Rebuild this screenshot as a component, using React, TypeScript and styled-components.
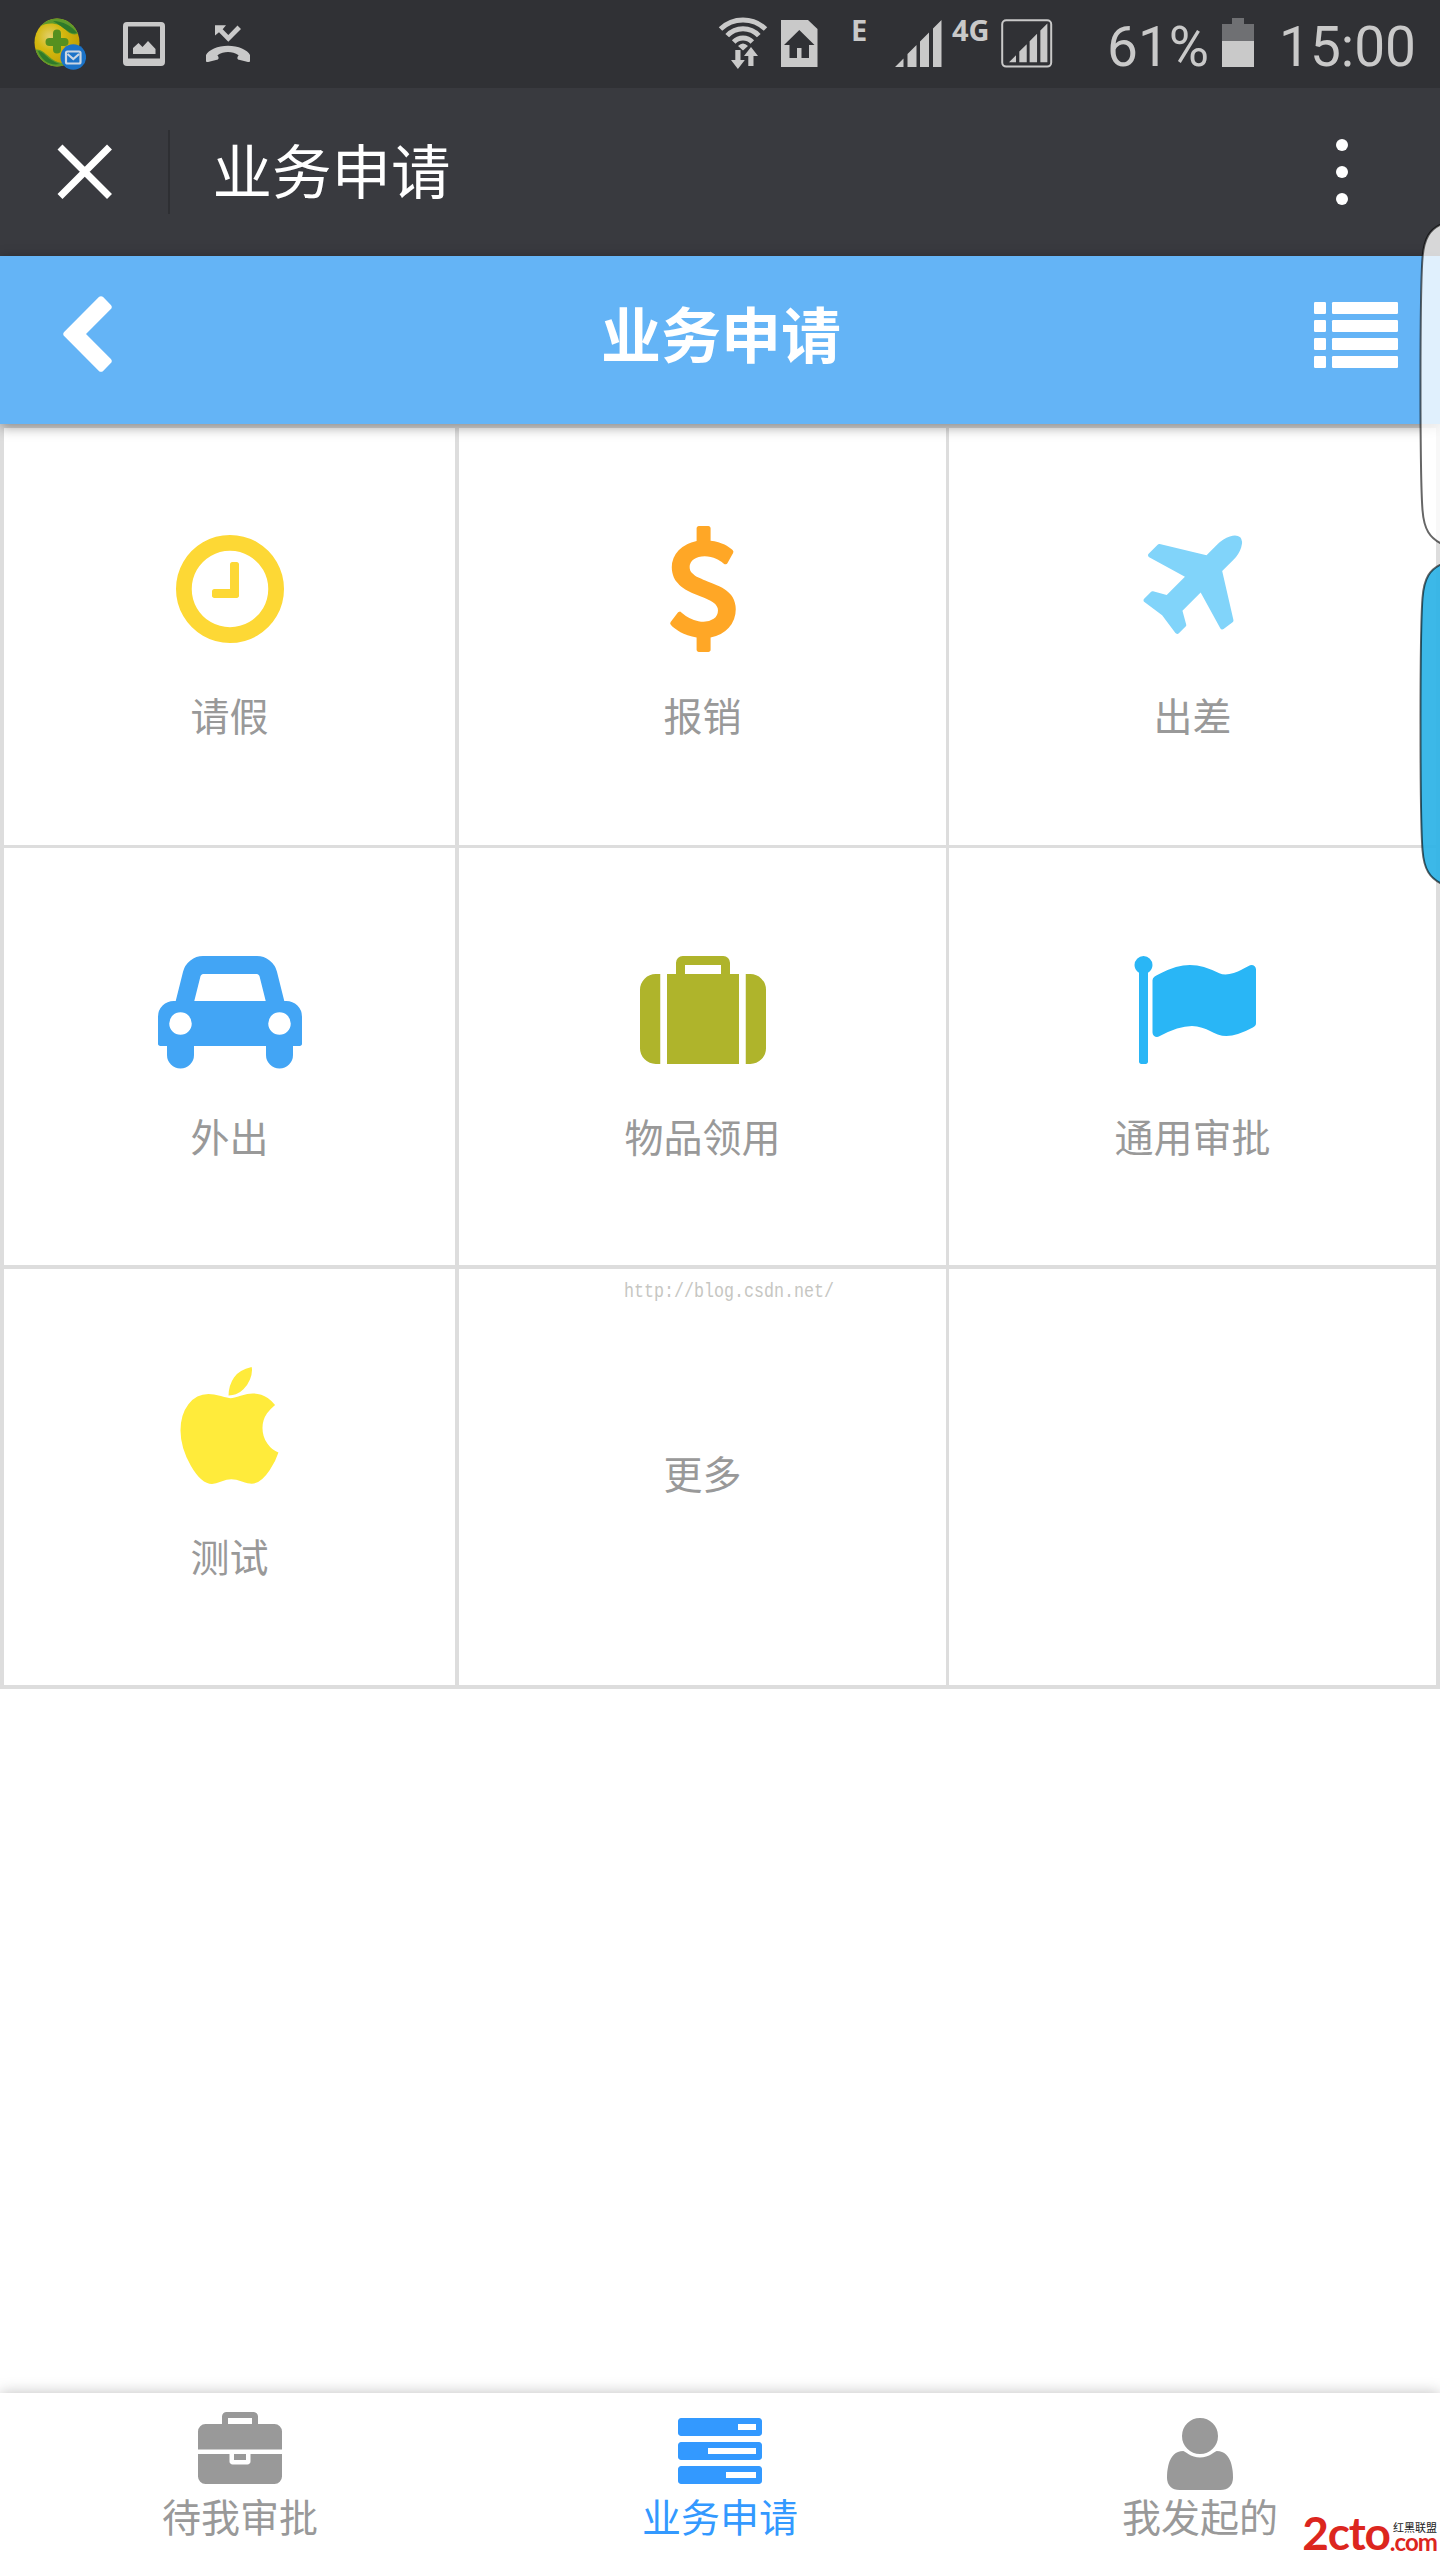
import React from "react";
import styled, { createGlobalStyle } from "styled-components";

const sans = '"Noto Sans CJK SC", "Noto Sans", sans-serif';

const GlobalStyle = createGlobalStyle`
  * { box-sizing: border-box; }
  html, body { margin: 0; padding: 0; background: #fff; }
  body { font-family: ${sans}; }
  svg { display: block; flex: none; }
`;

const Screen = styled.div`
  position: relative;
  display: flex;
  flex-direction: column;
  width: 1440px;
  height: 2560px;
  overflow: hidden;
  background: #fff;
`;

/* ---------- status bar ---------- */

const StatusBar = styled.header`
  display: flex;
  align-items: flex-start;
  height: 88px;
  flex: none;
  background: #303135;
  color: #c9c9c9;
`;

const Slot = styled.div<{ $gap?: number; $top?: number; $width?: number }>`
  flex: none;
  margin-left: ${(p) => p.$gap ?? 0}px;
  padding-top: ${(p) => p.$top ?? 0}px;
  width: ${(p) => (p.$width ? `${p.$width}px` : "auto")};
`;

const NetLabel = styled.div`
  font: 700 29px/30px "Noto Sans", "Open Sans", sans-serif;
  white-space: nowrap;
`;

const StatusText = styled.div`
  font: 400 55px/60px Roboto, sans-serif;
  white-space: nowrap;
`;

/* ---------- title bar ---------- */

const TitleBar = styled.div`
  display: flex;
  align-items: center;
  height: 168px;
  flex: none;
  padding: 0 90px 0 56px;
  background: #393a3f;
`;

const Divider = styled.div`
  width: 2px;
  height: 84px;
  margin: 0 42.5px 0 54px;
  background: #2e2f33;
`;

const TitleText = styled.div`
  flex: 1;
  padding-bottom: 9px;
  color: #fff;
  font-size: 59.5px;
  line-height: 84px;
`;

/* ---------- page header ---------- */

const PageHeader = styled.div`
  position: relative;
  z-index: 1;
  display: grid;
  grid-template-columns: 120px 1fr 120px;
  align-items: center;
  height: 168px;
  flex: none;
  padding: 0 42px;
  background: #64b4f6;
  box-shadow: 0 3px 12px rgba(0, 0, 0, 0.4);
`;

const Heading = styled.h1`
  margin: 0;
  padding: 0 0 17px 2px;
  color: #fff;
  text-align: center;
  font-size: 60px;
  font-weight: 700;
  line-height: 84px;
`;

const BackButton = styled.div`
  padding: 0 0 6px 2px;
`;

const MenuButton = styled.div`
  display: flex;
  justify-content: flex-end;
  padding-bottom: 10px;
`;

/* ---------- grid ---------- */

const Grid = styled.main`
  display: grid;
  flex: none;
  grid-template-columns: 455px 490px 487px;
  grid-template-rows: 420px 421px 416px;
  border: 4px solid #ddd;
`;

const Cell = styled.div<{ $right: number; $bottom: number; $top?: number }>`
  display: flex;
  flex-direction: column;
  align-items: center;
  justify-content: ${(p) => (p.$top ? "flex-start" : "center")};
  padding-top: ${(p) => p.$top ?? 0}px;
  border: solid #ddd;
  border-width: 0 ${(p) => p.$right}px ${(p) => p.$bottom}px 0;
`;

const CellLabel = styled.div<{ $plain?: boolean }>`
  margin-top: ${(p) => (p.$plain ? -10 : 32)}px;
  color: #999;
  font-size: 39px;
  line-height: 60px;
`;

/* ---------- bottom navigation ---------- */

const BottomNav = styled.nav`
  display: grid;
  grid-template-columns: repeat(3, 1fr);
  height: 167px;
  margin-top: auto;
  flex: none;
  background: #fff;
  box-shadow: 0 0 14px rgba(0, 0, 0, 0.25);
`;

const NavItem = styled.div<{ $active?: boolean }>`
  display: flex;
  flex-direction: column;
  align-items: center;
  padding-top: 13px;
  color: ${(p) => (p.$active ? "#3399ff" : "#999")};
`;

const NavLabel = styled.div`
  margin-top: -5px;
  font-size: 39px;
  line-height: 60px;
`;

/* ---------- floating overlays ---------- */

const EdgePanel = styled.div<{ $top: number }>`
  position: absolute;
  z-index: 3;
  right: 0;
  top: ${(p) => p.$top}px;
`;

const BlogMark = styled.div`
  position: absolute;
  left: 624px;
  top: 1280px;
  color: #c6c6c2;
  font: 20px/24px "Liberation Mono", monospace;
  transform: scaleX(0.833);
  transform-origin: 0 0;
  white-space: nowrap;
`;

const SiteLogo = styled.div`
  position: absolute;
  z-index: 2;
  right: 3px;
  bottom: 9px;
  display: flex;
  align-items: flex-end;
  color: #dc261e;
  font-family: Lato, sans-serif;
  font-weight: 700;
`;

const LogoName = styled.div`
  font-size: 46px;
  line-height: 36px;
  letter-spacing: -1.2px;
`;

const LogoSide = styled.div`
  display: flex;
  flex-direction: column;
  align-items: flex-end;
`;

const LogoTag = styled.div`
  color: #222;
  font: 400 11px/12px ${sans};
`;

const LogoDomain = styled.div`
  font-size: 24px;
  line-height: 18px;
  letter-spacing: -0.9px;
`;

/* ---------- icon data ---------- */

const paths = {
  clock:
    "M1024 544v448q0 14-9 23t-23 9h-320q-14 0-23-9t-9-23v-64q0-14 9-23t23-9h224v-352q0-14 9-23t23-9h64q14 0 23 9t9 23zm416 352q0-148-73-273t-198-198-273-73-273 73-198 198-73 273 73 273 198 198 273 73 273-73 198-198 73-273zm224 0q0 209-103 385.5t-279.5 279.5-385.5 103-385.5-103-279.5-279.5-103-385.5 103-385.5 279.5-279.5 385.5-103 385.5 103 279.5 279.5 103 385.5z",
  dollar:
    "M1362 1185q0 153-99.5 263.5t-258.5 136.5v175q0 14-9 23t-23 9h-135q-13 0-22.5-9.5t-9.5-22.5v-175q-66-9-127.5-31t-101.5-44.5-74-48-46.5-37.5-17.5-18q-17-21-2-41l103-135q7-10 23-12 15-2 24 9l2 2q113 99 243 125 37 8 74 8 81 0 142.5-43t61.5-122q0-28-15-53t-33.5-42-58.5-37.5-66-32-80-32.5q-39-16-61.5-25t-61.5-26.5-62.5-31-56.5-35.5-53.5-42.5-43.5-49-35.5-58-21-66.5-8.5-78q0-138 98-242t255-134v-180q0-13 9.5-22.5t22.5-9.5h135q14 0 23 9t9 23v176q57 6 110.5 23t87 33.5 63.5 37.5 39 29 15 14q17 18 5 38l-81 146q-8 15-23 16-14 3-27-7-3-3-14.5-12t-39-26.5-58.5-32-74.5-26-85.5-11.5q-95 0-155 43t-60 111q0 26 8.5 48t29.5 41.5 39.5 33 56 31 60.5 27 70 27.5q53 20 81 31.5t76 35 75.5 42.5 62 50 53 63.5 31.5 76.5 13 94z",
  plane:
    "M1568 160q44 52 12 148t-108 172l-161 161 160 696q5 19-12 33l-128 96q-7 6-19 6-4 0-7-1-15-3-21-16l-279-508-259 259 53 194q5 17-8 31l-96 96q-9 9-23 9h-2q-15-2-24-13l-189-252-252-189q-11-7-13-23-1-13 9-25l96-97q9-9 23-9 6 0 8 1l194 53 259-259-508-279q-14-8-17-24-2-16 9-27l128-128q14-13 30-8l665 159 160-160q76-76 172-108t148 12z",
  car:
    "M480 1088q0-66-47-113t-113-47-113 47-47 113 47 113 113 47 113-47 47-113zm36-320h1016l-89-357q-2-8-14-17.5t-21-9.5h-768q-9 0-21 9.5t-14 17.5zm1372 320q0-66-47-113t-113-47-113 47-47 113 47 113 113 47 113-47 47-113zm160-96v384q0 14-9 23t-23 9h-96v128q0 80-56 136t-136 56-136-56-56-136v-128h-1024v128q0 80-56 136t-136 56-136-56-56-136v-128h-96q-14 0-23-9t-9-23v-384q0-93 65.5-158.5t158.5-65.5h28l105-419q23-94 104-157.5t179-63.5h768q98 0 179 63.5t104 157.5l105 419h28q93 0 158.5 65.5t65.5 158.5z",
  suitcase:
    "M640 384h512v-128h-512v128zm-352 0v1280h-64q-92 0-158-66t-66-158v-832q0-92 66-158t158-66h64zm1120 0v1280h-1024v-1280h128v-160q0-40 28-68t68-28h576q40 0 68 28t28 68v160h128zm384 224v832q0 92-66 158t-158 66h-64v-1280h64q92 0 158 66t66 158z",
  flag:
    "M320 256q0 72-64 110v1266q0 13-9.5 22.5t-22.5 9.5h-64q-13 0-22.5-9.5t-9.5-22.5v-1266q-64-38-64-110 0-53 37.5-90.5t90.5-37.5 90.5 37.5 37.5 90.5zm1472 64v763q0 25-12.5 38.5t-39.5 27.5q-215 116-369 116-61 0-123.5-22t-108.5-48-115.5-48-142.5-22q-192 0-464 146-17 9-33 9-26 0-45-19t-19-45v-742q0-32 31-55 21-14 79-43 236-120 421-120 107 0 200 29t219 88q38 19 88 19 54 0 117.5-21t110-47 88-47 54.5-21q26 0 45 19t19 45z",
  apple:
    "M1585 1215q-39 125-123 250-129 196-257 196-49 0-140-32-86-32-151-32-61 0-142 33-81 34-132 34-152 0-301-259-147-261-147-503 0-228 113-374 113-144 284-144 72 0 177 30 104 30 138 30 45 0 143-34 102-34 173-34 119 0 213 65 52 36 104 100-79 67-114 118-65 94-65 207 0 124 69 223t158 126zm-376-1173q0 61-29 136-30 75-93 138-54 54-108 72-37 11-104 17 3-149 78-257 74-107 250-148 1 3 2.5 11t2.5 11q0 4 .5 10t.5 10z",
  chevron:
    "M1427 301l-531 531 531 531q19 19 19 45t-19 45l-166 166q-19 19-45 19t-45-19l-742-742q-19-19-19-45t19-45l742-742q19-19 45-19t45 19l166 166q19 19 19 45t-19 45z",
  briefcase:
    "M640 384h512v-128h-512v128zm1152 640v480q0 66-47 113t-113 47h-1472q-66 0-113-47t-47-113v-480h672v160q0 26 19 45t45 19h320q26 0 45-19t19-45v-160h672zm-768 0v128h-256v-128h256zm768-480v384h-1792v-384q0-66 47-113t113-47h352v-160q0-40 28-68t68-28h576q40 0 68 28t28 68v160h352q66 0 113 47t47 113z",
  tasks:
    "M1024 1536h640v-128h-640v128zm-384-512h1024v-128h-1024v128zm640-512h384v-128h-384v128zm512 832v256q0 26-19 45t-45 19h-1664q-26 0-45-19t-19-45v-256q0-26 19-45t45-19h1664q26 0 45 19t19 45zm0-512v256q0 26-19 45t-45 19h-1664q-26 0-45-19t-19-45v-256q0-26 19-45t45-19h1664q26 0 45 19t19 45zm0-512v256q0 26-19 45t-45 19h-1664q-26 0-45-19t-19-45v-256q0-26 19-45t45-19h1664q26 0 45 19t19 45z",
  user:
    "M1600 1533q0 120-73 189.5t-194 69.5h-874q-121 0-194-69.5t-73-189.5q0-53 3.5-103.5t14-109 26.5-108.5 43-97.5 62-81 85.5-53.5 111.5-20q9 0 42 21.5t74.5 48 108 48 133.5 21.5 133.5-21.5 108-48 74.5-48 42-21.5q61 0 111.5 20t85.5 53.5 62 81 43 97.5 26.5 108.5 14 109 3.5 103.5zm-320-893q0 159-112.5 271.5t-271.5 112.5-271.5-112.5-112.5-271.5 112.5-271.5 271.5-112.5 271.5 112.5 112.5 271.5z",
};

type IconName = keyof typeof paths;

function Icon({ name, size, color = "currentColor" }: { name: IconName; size: number; color?: string }) {
  const units = name === "car" ? 2048 : 1792;
  return (
    <svg width={(size * units) / 1792} height={size} viewBox={`0 0 ${units} 1792`} fill={color}>
      <path d={paths[name]} />
    </svg>
  );
}

function ListIcon() {
  return (
    <svg width="84" height="66" viewBox="0 0 84 66" fill="#fff">
      {[0, 18, 36, 54].map((y) => (
        <g key={y}>
          <rect x="0" y={y} width="12" height="12" rx="1.2" />
          <rect x="18" y={y} width="66" height="12" rx="1.2" />
        </g>
      ))}
    </svg>
  );
}

function ShieldMailIcon() {
  return (
    <svg width="52" height="53" viewBox="0 0 52 53">
      <defs>
        <radialGradient id="ball" cx="0.3" cy="0.35" r="0.75">
          <stop offset="0" stopColor="#e2cf6a" />
          <stop offset="0.35" stopColor="#d3b80f" />
          <stop offset="1" stopColor="#b89400" />
        </radialGradient>
        <clipPath id="ballClip">
          <ellipse cx="23" cy="24.5" rx="22.5" ry="24" />
        </clipPath>
      </defs>
      <g clipPath="url(#ballClip)">
        <rect width="52" height="53" fill="url(#ball)" />
        <path d="M5 9C14 3 25 5 31 11C35 16 40 18 46 15V-2H8Z" fill="#5f9a2c" />
        <path d="M19 3C29 3 38 8 43 15C36 17 32 11 19 3Z" fill="#2f7a2a" />
        <path d="M0 32C7 30 11 36 18 41C25 46 33 46 38 42L34 53H0Z" fill="#5f9a2c" />
        <path d="M4 33C10 33 13 42 26 46C16 48 8 43 4 33Z" fill="#2f7a2a" />
      </g>
      <path d="M23 15.500v16M15.500 24h15" stroke="#55901f" strokeWidth="8" strokeLinecap="round" />
      <circle cx="39.3" cy="39" r="12.8" fill="#1b73c8" />
      <rect x="32" y="33.5" width="14.5" height="12" rx="1.5" fill="none" stroke="#c9d6e3" strokeWidth="2.2" />
      <path d="M33.5 36l5.8 5 5.8-5" fill="none" stroke="#c9d6e3" strokeWidth="2.2" />
    </svg>
  );
}

function PictureIcon() {
  return (
    <svg width="42" height="44" viewBox="0 0 42 44" fill="#c9c9c9">
      <path
        fillRule="evenodd"
        d="M4 0H38Q42 0 42 4V40Q42 44 38 44H4Q0 44 0 40V4Q0 0 4 0ZM5 4.5V36.5H37V4.5Z"
      />
      <path d="M10 32V26L15.5 21L19.5 25L25 19L32.5 27V32Z" />
    </svg>
  );
}

function MissedCallIcon() {
  return (
    <svg width="44" height="38" viewBox="0 0 44 38" fill="#c9c9c9">
      <path d="M9 .3H20L16.7 4.2L22.3 10L31.5 .5L35 4L22.3 16.7L13 7.3L9 10.5Z" />
      <path d="M0 30C2 25 12 20.7 22 20.7C32 20.7 42 25 44 30V36C44 37 43 37.3 42 37L33 34.8C31.5 34.4 30.5 33 32.6 30.2C26 25.8 18 25.8 11.4 30.2C13.5 33 12.5 34.4 11 34.8L2 37C1 37.3 0 37 0 36Z" />
    </svg>
  );
}

function WifiIcon() {
  return (
    <svg width="50" height="53" viewBox="0 0 50 53" fill="#c9c9c9">
      <g fill="none" stroke="#c9c9c9" strokeWidth="5">
        <path d="M2.5 12A32.6 32.6 0 0 1 47.5 12" />
        <path d="M9.2 18.6A21.5 21.5 0 0 1 40.8 18.6" />
        <path d="M15.7 25A12.8 12.8 0 0 1 34.3 25" />
      </g>
      <path d="M20 29Q25 24 30 29L25 33.5Z" />
      <path d="M17.3 33h5.2v10h4.3L19.9 52 13 43h4.3z" />
      <path d="M30.3 49h5.2V39h4.5L33 30 26 39h4.3z" />
    </svg>
  );
}

function SimHomeIcon() {
  return (
    <svg width="37" height="47" viewBox="0 0 37 47">
      <path d="M0 0H27L36.5 9V47H0Z" fill="#c9c9c9" />
      <path d="M18.3 10L33.5 25H28V38H20.5V28H16V38H8.5V25H3Z" fill="#303135" />
    </svg>
  );
}

const bars = "M0 47L8.5 38.5V47ZM12.5 47V34L21.5 25V47ZM25 47V21.5L34 12.5V47ZM38 47V8.500L46.500 0V47Z";

function SignalIcon() {
  return (
    <svg width="47" height="47" viewBox="0 0 47 47" fill="#c9c9c9">
      <path d={bars} />
    </svg>
  );
}

function BoxedSignalIcon() {
  return (
    <svg width="52" height="49" viewBox="0 0 52 49" fill="#c9c9c9">
      <rect x="1.2" y="1.2" width="49" height="46.4" rx="4" fill="none" stroke="#c9c9c9" strokeWidth="2" />
      <path transform="translate(8 4.500) scale(0.825)" d={bars} />
    </svg>
  );
}

function BatteryIcon() {
  return (
    <svg width="32" height="49" viewBox="0 0 32 49">
      <path d="M10 0H22V6H32V23H0V6H10Z" fill="#6f7073" />
      <rect y="23" width="32" height="26" fill="#c9c9c9" />
    </svg>
  );
}

function CloseIcon() {
  return (
    <svg width="58" height="58" viewBox="0 0 58 58" stroke="#fff" strokeWidth="7">
      <path d="M4 4L53.500 53.500M53.500 4L4 53.500" />
    </svg>
  );
}

function MoreIcon() {
  return (
    <svg width="16" height="68" viewBox="0 0 16 68" fill="#fff">
      <circle cx="8" cy="7" r="6" />
      <circle cx="8" cy="34" r="6" />
      <circle cx="8" cy="61" r="6" />
    </svg>
  );
}

function EdgeShape({ fill }: { fill: string }) {
  return (
    <svg width="21" height="320" viewBox="0 0 21 320">
      <path
        d="M23 0C11 5 5 14 3.500 34C1.500 60 1.500 100 1.500 160C1.500 220 1.500 260 3.500 286C5 306 11 314 23 320Z"
        fill={fill}
        stroke="#000"
        strokeOpacity="0.6"
        strokeWidth="2"
      />
    </svg>
  );
}

/* ---------- content ---------- */

type Entry = { label?: string; icon?: IconName; color?: string };

const entries: Entry[] = [
  { label: "请假", icon: "clock", color: "#fdd835" },
  { label: "报销", icon: "dollar", color: "#ffa726" },
  { label: "出差", icon: "plane", color: "#81d4fa" },
  { label: "外出", icon: "car", color: "#42a5f5" },
  { label: "物品领用", icon: "suitcase", color: "#afb42b" },
  { label: "通用审批", icon: "flag", color: "#29b6f6" },
  { label: "测试", icon: "apple", color: "#ffeb3b" },
  { label: "更多" },
  {},
];

const columnRule = [4, 3, 0];
const rowRule = [3, 4, 0];
const rowPadding = [98, 99, 98];

const tabs: { label: string; icon: IconName; active?: boolean }[] = [
  { label: "待我审批", icon: "briefcase" },
  { label: "业务申请", icon: "tasks", active: true },
  { label: "我发起的", icon: "user" },
];

export default function App() {
  return (
    <Screen>
      <GlobalStyle />

      <StatusBar>
        <Slot $gap={34} $top={18} $width={52}><ShieldMailIcon /></Slot>
        <Slot $gap={37} $top={22} $width={42}><PictureIcon /></Slot>
        <Slot $gap={41} $top={25} $width={44}><MissedCallIcon /></Slot>
        <Slot $gap={468} $top={17} $width={50}><WifiIcon /></Slot>
        <Slot $gap={13} $top={20} $width={37}><SimHomeIcon /></Slot>
        <Slot $gap={33} $top={15} $width={20}><NetLabel>E</NetLabel></Slot>
        <Slot $gap={24} $top={20} $width={47}><SignalIcon /></Slot>
        <Slot $gap={10} $top={15} $width={40}><NetLabel>4G</NetLabel></Slot>
        <Slot $gap={9} $top={19} $width={52}><BoxedSignalIcon /></Slot>
        <Slot $gap={54} $top={17} $width={104}><StatusText>61%</StatusText></Slot>
        <Slot $gap={11} $top={18} $width={32}><BatteryIcon /></Slot>
        <Slot $gap={25} $top={17} $width={150}><StatusText>15:00</StatusText></Slot>
      </StatusBar>

      <TitleBar>
        <CloseIcon />
        <Divider />
        <TitleText>业务申请</TitleText>
        <MoreIcon />
      </TitleBar>

      <PageHeader>
        <BackButton><Icon name="chevron" size={84} color="#fff" /></BackButton>
        <Heading>业务申请</Heading>
        <MenuButton><ListIcon /></MenuButton>
      </PageHeader>

      <Grid>
        {entries.map((entry, i) => (
          <Cell
            key={i}
            $right={columnRule[i % 3]}
            $bottom={rowRule[Math.floor(i / 3)]}
            $top={entry.icon && rowPadding[Math.floor(i / 3)]}
          >
            {entry.icon && <Icon name={entry.icon} size={126} color={entry.color} />}
            {entry.label && <CellLabel $plain={!entry.icon}>{entry.label}</CellLabel>}
          </Cell>
        ))}
      </Grid>

      <BottomNav>
        {tabs.map((tab) => (
          <NavItem key={tab.label} $active={tab.active}>
            <Icon name={tab.icon} size={84} />
            <NavLabel>{tab.label}</NavLabel>
          </NavItem>
        ))}
      </BottomNav>

      <BlogMark>http://blog.csdn.net/</BlogMark>

      <EdgePanel $top={224}><EdgeShape fill="rgba(255,255,255,0.8)" /></EdgePanel>
      <EdgePanel $top={564}><EdgeShape fill="rgba(43,178,230,0.92)" /></EdgePanel>

      <SiteLogo>
        <LogoName>2cto</LogoName>
        <LogoSide>
          <LogoTag>红黑联盟</LogoTag>
          <LogoDomain>.com</LogoDomain>
        </LogoSide>
      </SiteLogo>
    </Screen>
  );
}
